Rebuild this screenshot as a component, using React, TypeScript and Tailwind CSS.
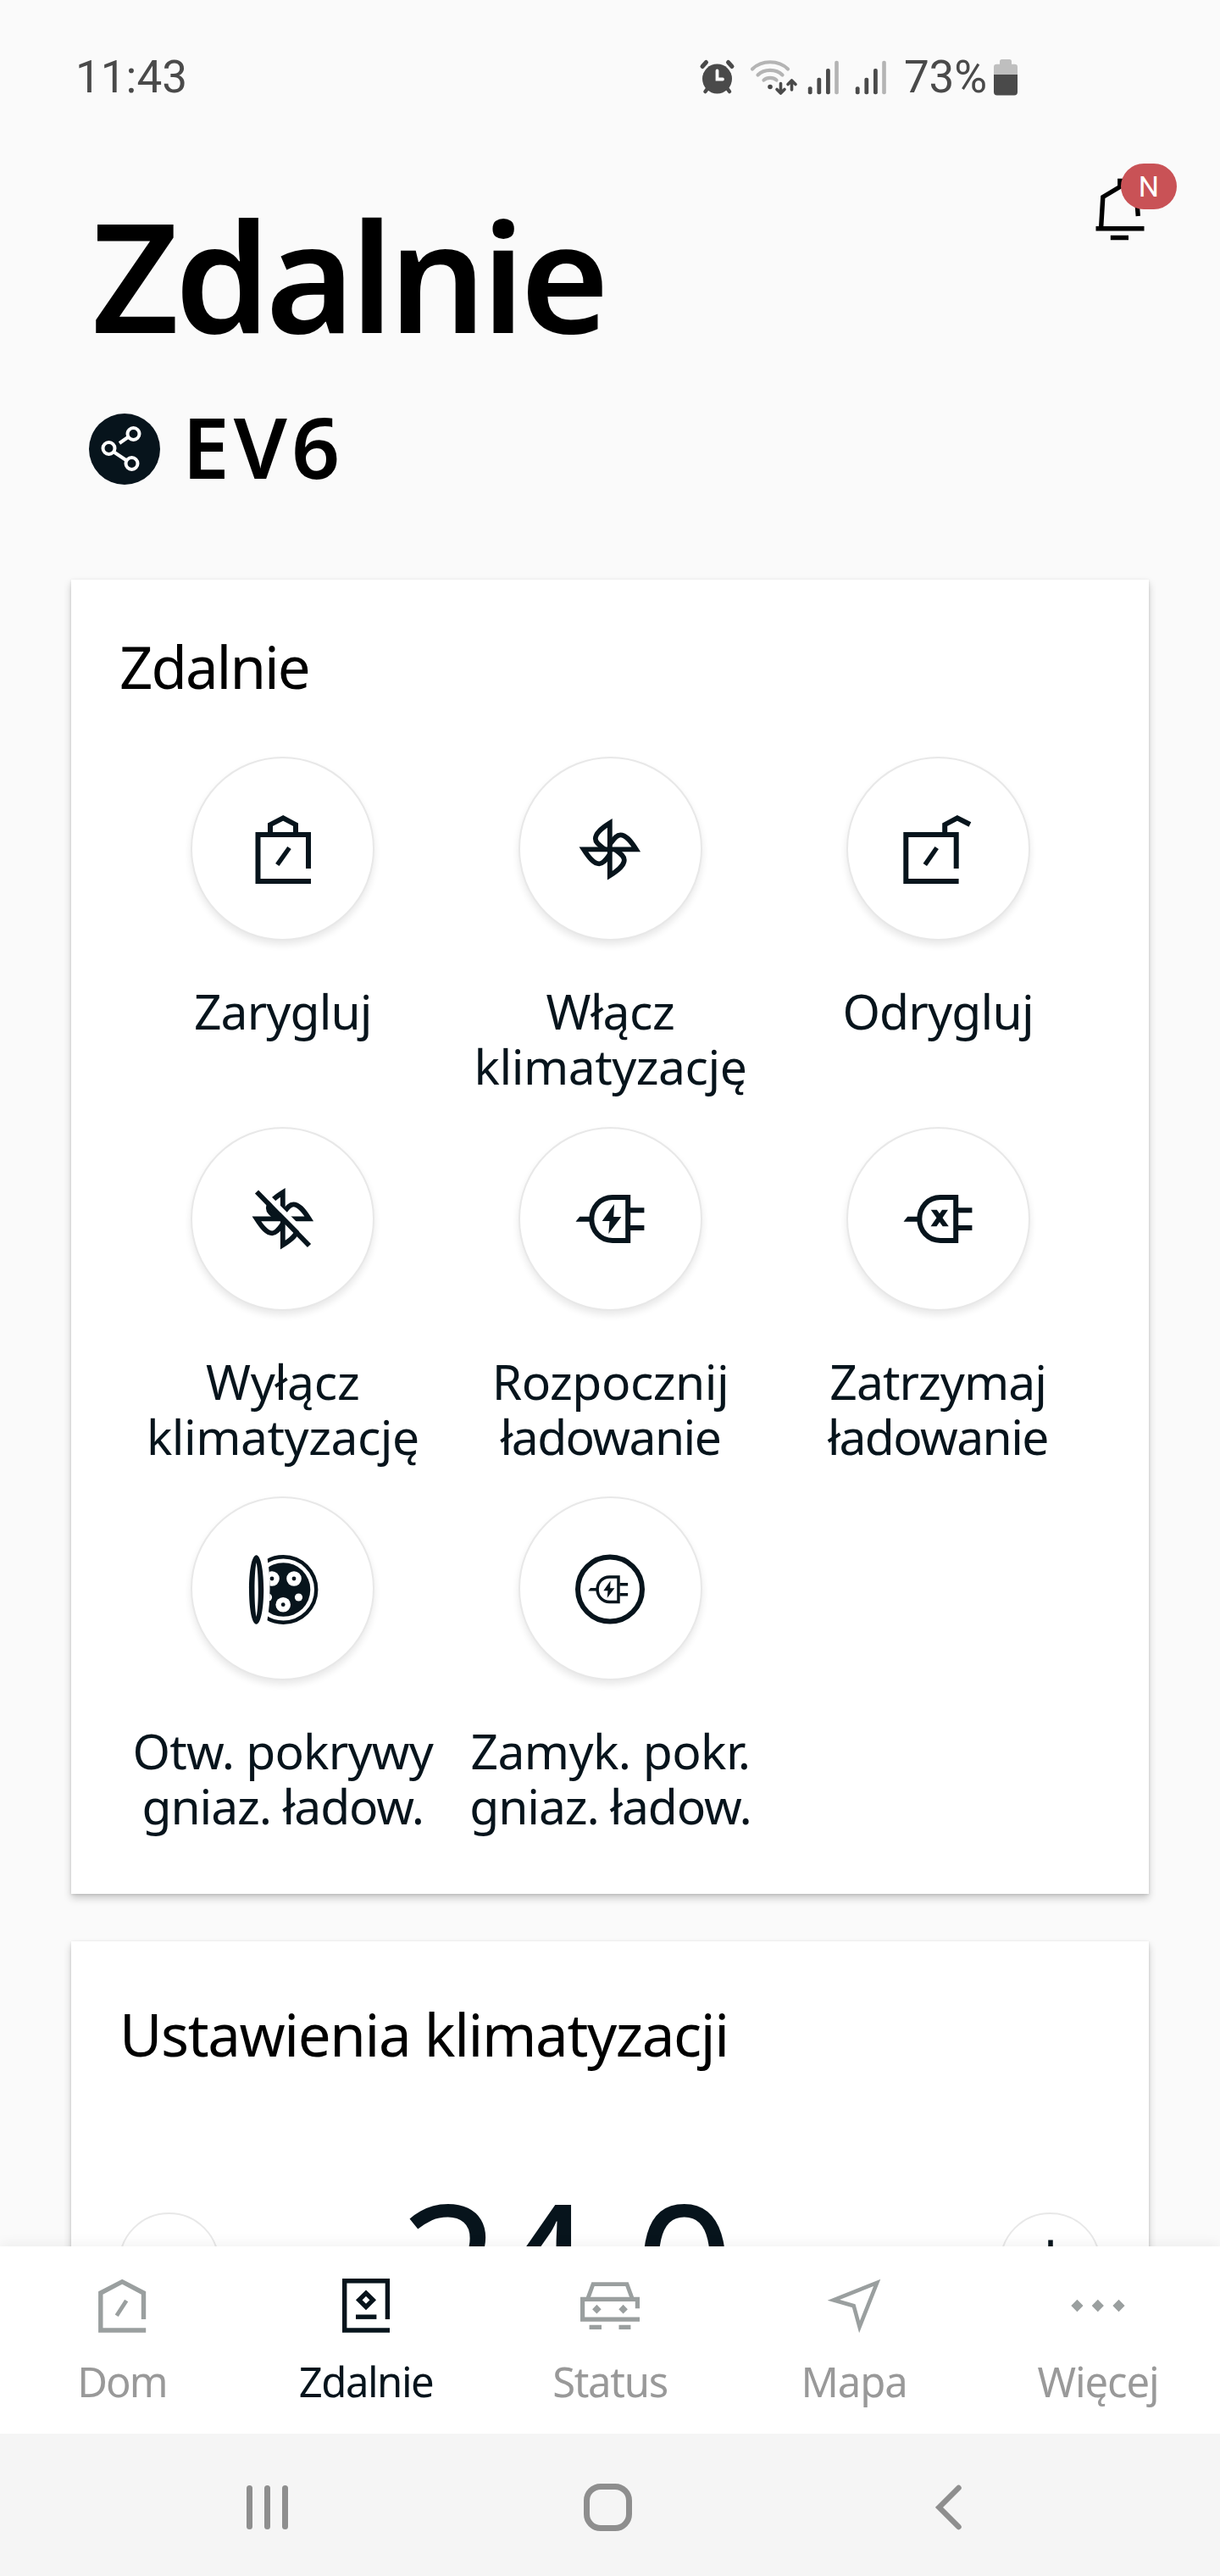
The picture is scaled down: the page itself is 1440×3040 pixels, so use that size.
import React from "react";

const INK = "#07141c";
const MUTED = "#9a9f9f";

/* ---------- status bar ---------- */

function AlarmIcon() {
  return (
    <svg className="h-[46px] w-[44px] shrink-0" viewBox="824 68 44 46" fill="none" stroke="#4a4a4a" strokeLinecap="round">
      <circle cx="846.5" cy="93" r="17.5" fill="#4a4a4a" stroke="none" />
      <path d="M829 78.5L833.5 73.5M864 78.5L859.5 73.5" strokeWidth="5" />
      <path d="M832.5 108L837 102M861 108L856.5 102" strokeWidth="4.5" />
      <path d="M846.5 83.500V93.500H853" stroke="#fafafa" strokeWidth="3.800" />
    </svg>
  );
}

function WifiIcon() {
  return (
    <svg className="ml-[16px] h-[46px] w-[58px] shrink-0" viewBox="884 68 58 46" fill="none" strokeLinecap="round">
      <g stroke="#b4b4b4" strokeWidth="4.200">
        <path d="M888 81.500C899 70.500 919 70.500 930 81.500" />
        <path d="M894.500 88.500C902 81 916 81 923.500 88.500" />
        <path d="M901.500 94.500C905.500 91 912.500 91 916.500 94.500" />
      </g>
      <circle cx="909" cy="102.500" r="2.800" fill="#4a4a4a" />
      <g stroke="#4a4a4a" strokeWidth="3.600" strokeLinejoin="round">
        <path d="M921.500 98.500V109.500M917 105.500L921.500 110L926 105.500" />
        <path d="M934.500 106V95.500M930 99.500L934.500 95L939 99.500" />
      </g>
    </svg>
  );
}

function SignalIcon({ className }: { className: string }) {
  return (
    <svg className={`h-[46px] w-[38px] shrink-0 ${className}`} viewBox="0 68 38 46" fill="#4a4a4a">
      <rect x="1.800" y="102.300" width="4.800" height="9" rx="2" />
      <rect x="12.400" y="91.700" width="4.800" height="19.600" rx="2" />
      <rect x="23" y="81" width="4.800" height="30.300" rx="2" />
      <rect x="33.200" y="71.700" width="4.600" height="39.600" rx="2" fill="#b4b4b4" />
    </svg>
  );
}

function BatteryIcon() {
  return (
    <svg className="h-[46px] w-[30px] shrink-0" viewBox="1172 68 30 46">
      <path d="M1173 88V79Q1173 75.700 1176.500 75.700H1180V72.500Q1180 70 1182.500 70H1191.500Q1194 70 1194 72.500V75.700H1197.500Q1201 75.700 1201 79V88Z" fill="#bfbfbf" />
      <path d="M1173 88H1201V108.500Q1201 112.500 1197 112.500H1177Q1173 112.500 1173 108.500Z" fill="#4a4a4a" />
    </svg>
  );
}

/* ---------- header ---------- */

function Bell() {
  return (
    <div className="relative mt-[8px] mr-[45px] h-[100px] w-[110px]">
      <svg className="h-[100px] w-[110px]" viewBox="1285 190 110 100" fill="none" stroke="#000" strokeWidth="5.400">
        <path d="M1299.600 269L1301.800 232.500L1321.800 220.500V213.500H1333V220.500L1341.500 232L1343.300 255" />
        <path d="M1293.500 269.700H1350.500M1310.800 280.500H1332" />
      </svg>
      <span className="absolute top-[3px] left-[38px] flex h-[54px] w-[66px] items-center justify-center rounded-full bg-[#c95256] font-['Roboto',sans-serif] text-[34px] leading-none text-white">
        N
      </span>
    </div>
  );
}

function ShareBadge() {
  return (
    <svg className="h-[84px] w-[84px] shrink-0" viewBox="0 0 84 84" fill="none" stroke="#fff" strokeWidth="4">
      <circle cx="42" cy="42" r="42" fill={INK} stroke="none" />
      <circle cx="23.500" cy="41" r="7" />
      <circle cx="52.500" cy="24" r="7" />
      <circle cx="50.500" cy="59" r="7" />
      <path d="M46 28L36 35M29.500 45.500L44.500 55.500" />
    </svg>
  );
}

/* ---------- remote action icons, drawn around (0,0) ---------- */

function LockIcon() {
  return (
    <g fill="none" stroke={INK} strokeWidth="6">
      <path d="M30 23V-17H-29.500V38H33" />
      <path d="M-15 -17V-28.800L0.200 -36.700L15 -28.800V-17" />
      <path d="M7.500 -1.500L-6.700 18.500" strokeWidth="5.400" />
    </g>
  );
}

function UnlockIcon() {
  return (
    <g fill="none" stroke={INK} strokeWidth="6">
      <path d="M21.700 23V-17H-37.700V38H24.600" />
      <path d="M8.200 -17V-28.800L22.900 -36.700L37.900 -29" />
      <path d="M-1.300 -1.500L-15.200 18.500" strokeWidth="5.400" />
    </g>
  );
}

const BLADE = "M0 0V-31C-11 -24 -17 -18.500 -17 -12.500C-17 -7.500 -11 -4 -6 0";

function FanBlades() {
  return (
    <g transform="translate(-0.200 0.300)" fill="none" stroke={INK} strokeWidth="5.800" strokeMiterlimit="10">
      <path d={BLADE} />
      <path d={BLADE} transform="rotate(90)" />
      <path d={BLADE} transform="rotate(180)" />
      <path d={BLADE} transform="rotate(270)" />
      <circle r="3" fill={INK} stroke="none" />
    </g>
  );
}

function FanOffIcon() {
  return (
    <g>
      <FanBlades />
      <path d="M-12 -14L-4 -4L-14 -2Z" fill={INK} />
      <path d="M-20 -28L32 24" stroke="#fff" strokeWidth="6" />
      <path d="M-31 -31.500L31 32" stroke={INK} strokeWidth="5.800" />
    </g>
  );
}

function PlugBody() {
  return (
    <g>
      <path d="M21.200 -25H3C-12 -25 -21.700 -13 -21.700 0.500C-21.700 14 -12 26 3 26H21.200Z" fill="none" stroke={INK} strokeWidth="6" />
      <path d="M24 -9.700H40.400M24 10.900H40.400" stroke={INK} strokeWidth="6" />
      <path d="M-40.500 3.700L-35.800 -2.300H-23V3.700Z" fill={INK} />
    </g>
  );
}

const BOLT = "M5 -17L-9.300 3H-0.500L-1.700 18L13.400 -2H4.200Z";

function ChargeIcon() {
  return (
    <g>
      <PlugBody />
      <path d={BOLT} fill={INK} />
    </g>
  );
}

function StopChargeIcon() {
  return (
    <g>
      <PlugBody />
      <path d="M-8.300 -10.300H-1.200L12.800 9.300H5.700Z" fill={INK} />
      <path d="M12 -10.300H5L-8.500 9.300H-1.500Z" fill={INK} />
    </g>
  );
}

function PortOpenIcon() {
  return (
    <g>
      <defs>
        <clipPath id="port-ring">
          <path d="M-19.500 -45H45V45H-19.500Q-12 0 -19.500 -45Z" />
        </clipPath>
        <clipPath id="port-disc">
          <path d="M-18 -36H45V36H-18Q-13 0 -18 -36Z" />
        </clipPath>
      </defs>
      <path fillRule="evenodd" fill={INK} d="M-31.400 -39.700C-26 -39.700 -22.800 -20 -22.800 1C-22.800 22 -26 41.700 -31.400 41.700C-37 41.700 -40 22 -40 1C-40 -20 -37 -39.700 -31.400 -39.700ZM-31.400 -31C-33 -24 -33.500 -10 -33.500 1C-33.500 12 -33 26 -31.400 33C-29.800 26 -29.200 12 -29.200 1C-29.200 -10 -29.800 -24 -31.400 -31Z" />
      <circle cx="0.500" cy="1" r="38.700" fill="none" stroke={INK} strokeWidth="4.400" clipPath="url(#port-ring)" />
      <g clipPath="url(#port-disc)">
        <circle cx="0.500" cy="1" r="31.800" fill={INK} />
        <g fill="#fff">
          <circle cx="13" cy="-12" r="8.800" />
          <circle cx="-13" cy="-12" r="8.800" />
          <circle cx="0.200" cy="18.700" r="8.800" />
          <circle cx="18.500" cy="10" r="4.600" />
          <circle cx="-17.500" cy="10" r="4.600" />
        </g>
        <g fill={INK}>
          <circle cx="13" cy="-12" r="2.400" />
          <circle cx="-13" cy="-12" r="2.400" />
          <circle cx="0.200" cy="18.700" r="2.400" />
        </g>
      </g>
    </g>
  );
}

function PortClosedIcon() {
  return (
    <g>
      <circle cx="0" cy="0.500" r="38" fill="none" stroke={INK} strokeWidth="6" />
      <g transform="translate(-2.300 0.400) scale(0.580)">
        <ChargeIcon />
      </g>
    </g>
  );
}

type Line = { text: string; tracking: string };
type Action = { icon: React.ReactNode; lines: Line[] };

const ACTIONS: Action[] = [
  { icon: <LockIcon />, lines: [{ text: "Zarygluj", tracking: "tracking-[-0.9px]" }] },
  {
    icon: <FanBlades />,
    lines: [
      { text: "Włącz", tracking: "tracking-[-0.4px]" },
      { text: "klimatyzację", tracking: "tracking-[-0.5px]" },
    ],
  },
  { icon: <UnlockIcon />, lines: [{ text: "Odrygluj", tracking: "tracking-[-0.8px]" }] },
  {
    icon: <FanOffIcon />,
    lines: [
      { text: "Wyłącz", tracking: "tracking-[-0.2px]" },
      { text: "klimatyzację", tracking: "tracking-[-0.5px]" },
    ],
  },
  {
    icon: <ChargeIcon />,
    lines: [
      { text: "Rozpocznij", tracking: "tracking-[-0.5px]" },
      { text: "ładowanie", tracking: "tracking-[-1.6px]" },
    ],
  },
  {
    icon: <StopChargeIcon />,
    lines: [
      { text: "Zatrzymaj", tracking: "tracking-[-1px]" },
      { text: "ładowanie", tracking: "tracking-[-1.6px]" },
    ],
  },
  {
    icon: <PortOpenIcon />,
    lines: [
      { text: "Otw. pokrywy", tracking: "tracking-[-0.8px]" },
      { text: "gniaz. ładow.", tracking: "tracking-[-1.1px]" },
    ],
  },
  {
    icon: <PortClosedIcon />,
    lines: [
      { text: "Zamyk. pokr.", tracking: "tracking-[-0.6px]" },
      { text: "gniaz. ładow.", tracking: "tracking-[-1.1px]" },
    ],
  },
];

function ActionButton({ icon, lines }: Action) {
  return (
    <div className="flex flex-col items-center">
      <div className="flex h-[217px] w-[217px] shrink-0 items-center justify-center rounded-full border-2 border-[#e8e8e8] bg-white shadow-[0_5px_8px_rgba(0,0,0,0.09)]">
        <svg className="h-[96px] w-[96px]" viewBox="-48 -48 96 96">
          {icon}
        </svg>
      </div>
      <div className="mt-[51px] text-center text-[57px] leading-[65px] whitespace-nowrap text-[#07141c]">
        {lines.map((l) => (
          <div key={l.text} className={l.tracking}>
            {l.text}
          </div>
        ))}
      </div>
    </div>
  );
}

/* ---------- bottom tabs ---------- */

const TABS = [
  {
    label: "Dom",
    tracking: "tracking-[-1.9px]",
    active: false,
    icon: (
      <g fill="none" stroke={MUTED} strokeWidth="5.400">
        <path d="M25.500 16V-15L0.200 -28.300L-25.200 -15V29H28.200" />
        <path d="M5.200 -6L-6.300 11.700" strokeWidth="4.800" />
      </g>
    ),
  },
  {
    label: "Zdalnie",
    tracking: "tracking-[-1.5px]",
    active: true,
    icon: (
      <g fill="none" stroke={INK} strokeWidth="5.400">
        <path d="M25.400 16V-29.300H-25.300V29H28" />
        <path d="M0 -14.800L8.200 -6.700L0 1.400L-8.200 -6.700Z" />
        <path d="M-12 13.200H12.400" />
      </g>
    ),
  },
  {
    label: "Status",
    tracking: "tracking-[-1.3px]",
    active: false,
    icon: (
      <g fill="none" stroke={MUTED} strokeWidth="5.200">
        <path d="M32.400 3.300V-7.700H-32.400V16.200H35" />
        <path d="M-26.500 -7.700L-20 -25.400H20L26.500 -7.700" strokeWidth="4.800" />
        <path d="M-24.400 25.300H-10M10.500 25.300H24.400" />
        <path d="M-15.600 -1.200L-10.300 4.200L-15.600 9.600L-20.900 4.200ZM15.600 -1.200L20.900 4.200L15.600 9.600L10.300 4.200Z" fill={MUTED} stroke="none" />
      </g>
    ),
  },
  {
    label: "Mapa",
    tracking: "tracking-[-1.1px]",
    active: false,
    icon: <path d="M27.200 -27.200L-24.200 -6.700L-0.300 0.200L6.500 25Z" fill="none" stroke={MUTED} strokeWidth="4.600" strokeMiterlimit="10" />,
  },
  {
    label: "Więcej",
    tracking: "tracking-[-1.1px]",
    active: false,
    icon: (
      <path
        d="M-24.600 -7.200L-17.500 0L-24.600 7.200L-31.700 0ZM-0.200 -7.200L6.900 0L-0.200 7.200L-7.300 0ZM24.500 -7.200L31.600 0L24.500 7.200L17.400 0Z"
        fill={MUTED}
      />
    ),
  },
];

const CARD = "mx-[84px] w-[1272px] shrink-0 bg-white px-[57px] shadow-[0_5px_9px_rgba(0,0,0,0.2),0_1px_3px_rgba(0,0,0,0.12)]";

export default function App() {
  return (
    <div className="flex h-[3040px] w-[1440px] flex-col overflow-hidden bg-[#fafafa] font-['Noto_Sans',sans-serif] text-black">
      <main className="flex h-[2651px] shrink-0 flex-col overflow-hidden">
        <div className="flex h-[182px] shrink-0 items-center font-['Roboto',sans-serif] text-[53px] text-[#4a4a4a]">
          <div className="ml-[89px] w-[735px] pt-[2px]">11:43</div>
          <AlarmIcon />
          <WifiIcon />
          <SignalIcon className="ml-[10px]" />
          <SignalIcon className="ml-[18px]" />
          <div className="ml-[21px] w-[105px] pt-[1px] tracking-[-0.2px]">73%</div>
          <BatteryIcon />
        </div>

        <header className="flex shrink-0 items-start justify-between">
          <h1 className="mt-[52px] ml-[108px] text-[180px] leading-[180px] font-semibold tracking-[-5.4px]">Zdalnie</h1>
          <Bell />
        </header>

        <div className="mt-[74px] ml-[105px] flex h-[84px] shrink-0 items-start gap-[26px]">
          <ShareBadge />
          <h2 className="text-[100px] leading-[76px] font-semibold tracking-[5px]">EV6</h2>
        </div>

        <section className={`${CARD} mt-[112px] h-[1551px] pt-[68px]`}>
          <h3 className="text-[69px] leading-[69px] tracking-[-2px]">Zdalnie</h3>
          <div className="mt-[72px] -ml-[0.600px] grid auto-rows-[436.700px] grid-cols-[repeat(3,386.700px)]">
            {ACTIONS.map((a, i) => (
              <ActionButton key={i} icon={a.icon} lines={a.lines} />
            ))}
          </div>
        </section>

        <section className={`${CARD} mt-[56px] h-[700px] pt-[75px]`}>
          <h3 className="text-[69px] leading-[69px] tracking-[-1.4px]">Ustawienia klimatyzacji</h3>
          <div className="mt-[136px] -ml-[1px] flex items-start text-[#07141c]">
            <div className="mt-[40px] h-[119px] w-[119px] shrink-0 rounded-full border-2 border-[#e8e8e8]" />
            <div className="ml-[213px] text-[206px] leading-[200px]">
              <span className="tracking-[-8px]">2</span>
              <span className="tracking-[-3px]">4.0</span>
            </div>
            <div className="mt-[40px] ml-auto flex h-[119px] w-[119px] shrink-0 items-center justify-center rounded-full border-2 border-[#e8e8e8]">
              <svg className="h-[56px] w-[56px]" viewBox="-28 -28 56 56" stroke={INK} strokeWidth="5.500">
                <path d="M0 -27.500V27.500M-27.500 0H27.500" />
              </svg>
            </div>
          </div>
        </section>
      </main>

      <nav className="relative grid h-[221px] shrink-0 grid-cols-5 bg-white pt-[34px] shadow-[0_-4px_14px_rgba(0,0,0,0.05)]">
        {TABS.map((t) => (
          <div key={t.label} className={`flex flex-col items-center ${t.active ? "text-[#07141c]" : "text-[#999]"}`}>
            <svg className="h-[72px] w-[72px]" viewBox="-36 -36 72 72">
              {t.icon}
            </svg>
            <span className={`mt-[23px] text-[49px] leading-[60px] ${t.tracking}`}>{t.label}</span>
          </div>
        ))}
      </nav>

      <div className="relative flex h-[168px] shrink-0 items-center bg-[#f5f5f5] pt-[5px] pl-[291px]">
        <div className="flex gap-[14px]">
          <i className="h-[52px] w-[7px] rounded-full bg-[#8e8e8e]" />
          <i className="h-[52px] w-[7px] rounded-full bg-[#8e8e8e]" />
          <i className="h-[52px] w-[7px] rounded-full bg-[#8e8e8e]" />
        </div>
        <div className="ml-[349px] h-[56px] w-[57px] rounded-[20px] border-[7px] border-[#8e8e8e]" />
        <svg className="ml-[354px] h-[56px] w-[40px]" viewBox="0 0 40 56" fill="none" stroke="#8e8e8e" strokeWidth="6.500" strokeLinecap="round">
          <path d="M31.500 5L8.500 28L31.500 51" />
        </svg>
      </div>
    </div>
  );
}
